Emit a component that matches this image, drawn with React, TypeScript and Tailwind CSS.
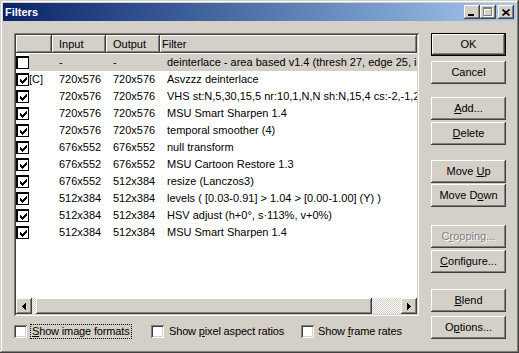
import type { ReactNode } from 'react'

const FONT = "font-['Liberation_Sans',Arial,sans-serif]"
const RAISED = 'shadow-[inset_-1px_-1px_#404040,inset_1px_1px_#fff,inset_-2px_-2px_#808080,inset_2px_2px_#d4d0c8]'
const SUNKEN = 'shadow-[inset_1px_1px_#808080,inset_-1px_-1px_#fff,inset_2px_2px_#404040,inset_-2px_-2px_#d4d0c8]'

const ROWS = [
  { on: false, tag: '', a: '-', b: '-', name: 'deinterlace - area based v1.4 (thresh 27, edge 25, interlaced only)', sel: true },
  { on: true, tag: '[C]', a: '720x576', b: '720x576', name: 'Asvzzz deinterlace' },
  { on: true, tag: '', a: '720x576', b: '720x576', name: 'VHS st:N,5,30,15,5 nr:10,1,N,N sh:N,15,4 cs:-2,-1,2,0,2' },
  { on: true, tag: '', a: '720x576', b: '720x576', name: 'MSU Smart Sharpen 1.4' },
  { on: true, tag: '', a: '720x576', b: '720x576', name: 'temporal smoother (4)' },
  { on: true, tag: '', a: '676x552', b: '676x552', name: 'null transform' },
  { on: true, tag: '', a: '676x552', b: '676x552', name: 'MSU Cartoon Restore 1.3' },
  { on: true, tag: '', a: '676x552', b: '512x384', name: 'resize (Lanczos3)' },
  { on: true, tag: '', a: '512x384', b: '512x384', name: 'levels ( [0.03-0.91] > 1.04 > [0.00-1.00] (Y) )' },
  { on: true, tag: '', a: '512x384', b: '512x384', name: 'HSV adjust (h+0°, s·113%, v+0%)' },
  { on: true, tag: '', a: '512x384', b: '512x384', name: 'MSU Smart Sharpen 1.4' },
]

// 7x7 classic check glyph
const CHECK = ['......x', '.....xx', 'x...xxx', 'xx.xxx.', 'xxxxx..', '.xxx...', '..x....']

function CheckGlyph() {
  return (
    <svg width="7" height="7" viewBox="0 0 7 7" shapeRendering="crispEdges">
      {CHECK.flatMap((line, y) =>
        line.split('').map((c, x) => (c === 'x' ? <rect key={`${x}-${y}`} x={x} y={y} width="1" height="1" fill="#000" /> : null)),
      )}
    </svg>
  )
}

function Btn({ children, def, disabled, className = '' }: { children: ReactNode; def?: boolean; disabled?: boolean; className?: string }) {
  return (
    <div
      className={`flex h-[23px] w-[75px] items-center justify-center bg-[#d4d0c8] text-[11px] ${
        def ? 'border border-black shadow-[inset_-1px_-1px_#404040,inset_1px_1px_#fff,inset_-2px_-2px_#808080]' : RAISED
      } ${disabled ? 'text-[#808080] [text-shadow:1px_1px_0_#fff]' : 'text-black'} ${className}`}
    >
      {children}
    </div>
  )
}

function Box({ checked }: { checked?: boolean }) {
  return (
    <div className={`flex h-[13px] w-[13px] shrink-0 items-center justify-center bg-white ${SUNKEN}`}>
      {checked && <CheckGlyph />}
    </div>
  )
}

function Arrow({ dir }: { dir: 'l' | 'r' }) {
  return (
    <div className={`flex h-[16px] w-[16px] shrink-0 items-center justify-center bg-[#d4d0c8] ${RAISED}`}>
      <svg width="4" height="7" viewBox="0 0 4 7" shapeRendering="crispEdges">
        <path d={dir === 'l' ? 'M4 0L0 3.5L4 7Z' : 'M0 0L4 3.5L0 7Z'} fill="#000" />
      </svg>
    </div>
  )
}

export default function App() {
  return (
    <div
      className={`flex h-[353px] w-[519px] flex-col bg-[#d4d0c8] p-[3px] ${FONT} shadow-[inset_-1px_-1px_#404040,inset_1px_1px_#d4d0c8,inset_-2px_-2px_#808080,inset_2px_2px_#fff]`}
    >
      {/* title bar */}
      <div className="flex h-[18px] items-center bg-gradient-to-r from-[#0a246a] to-[#a6caf0] pl-[2px] pr-[2px]">
        <span className="text-[11px] font-bold text-white">Filters</span>
        <div className="ml-auto flex items-center">
          <div className={`flex h-[14px] w-[16px] items-end justify-center bg-[#d4d0c8] pb-[3px] ${RAISED}`}>
            <div className="ml-[-2px] h-[2px] w-[6px] bg-black" />
          </div>
          <div className={`flex h-[14px] w-[16px] items-center justify-center bg-[#d4d0c8] ${RAISED}`}>
            <svg width="10" height="10" viewBox="0 0 10 10" shapeRendering="crispEdges" className="ml-[-1px]">
              <path d="M1 1h8v8h-8zM1 2h8" fill="none" stroke="#fff" transform="translate(0.5 0.5)" />
              <path d="M0 0h8v8h-8zM0 1h8" fill="none" stroke="#808080" transform="translate(0.5 0.5)" />
            </svg>
          </div>
          <div className={`ml-[2px] flex h-[14px] w-[16px] items-center justify-center bg-[#d4d0c8] ${RAISED}`}>
            <svg width="8" height="7" viewBox="0 0 8 7" className="ml-[-1px]">
              <path d="M0.5 0.5L7.5 6.5M7.5 0.5L0.5 6.5" stroke="#000" strokeWidth="1.6" />
            </svg>
          </div>
        </div>
      </div>

      <div className="flex flex-1 pl-[11px] pt-[12px] text-[11px] text-black">
        {/* left side */}
        <div className="flex w-[405px] flex-col">
          <div className={`flex h-[283px] flex-col overflow-hidden bg-white p-[2px] ${SUNKEN}`}>
            {/* header */}
            <div className="flex h-[18px] shrink-0 bg-[#d4d0c8]">
              <div className={`w-[36px] shrink-0 ${RAISED}`} />
              <div className={`flex w-[54px] shrink-0 items-center pl-[7px] ${RAISED}`}>Input</div>
              <div className={`flex w-[54px] shrink-0 items-center pl-[7px] ${RAISED}`}>Output</div>
              <div className={`flex flex-1 items-center pl-[2px] ${RAISED}`}>Filter</div>
            </div>
            {/* rows */}
            <div className="flex-1 overflow-hidden pt-[1px]">
              {ROWS.map((r, i) => (
                <div key={i} className="flex h-[17px] items-center whitespace-nowrap">
                  <div className="flex h-[13px] w-[13px] shrink-0 items-center justify-center border-b border-l-2 border-r border-t-2 border-black bg-white">
                    {r.on && <CheckGlyph />}
                  </div>
                  <div className={`flex h-full flex-1 items-center ${r.sel ? 'bg-[#d4d0c8]' : ''}`}>
                    <span className="w-[30px] shrink-0">{r.tag}</span>
                    <span className="w-[54px] shrink-0">{r.a}</span>
                    <span className="w-[54px] shrink-0">{r.b}</span>
                    <span>{r.name}</span>
                  </div>
                </div>
              ))}
            </div>
            {/* horizontal scrollbar */}
            <div className="flex h-[16px] shrink-0">
              <Arrow dir="l" />
              <div className="flex flex-1 bg-[repeating-conic-gradient(#fff_0_25%,#d4d0c8_0_50%)] bg-[length:2px_2px] pl-[4px] pr-[29px]">
                <div className={`flex-1 bg-[#d4d0c8] ${RAISED}`} />
              </div>
              <Arrow dir="r" />
            </div>
          </div>

          {/* options */}
          <div className="mt-[7px] flex items-center whitespace-nowrap tracking-[-0.15px]">
            <div className="flex w-[137px] shrink-0 items-center">
              <Box />
              <span className="ml-[3px] border border-dotted border-black px-[1px] leading-[13px]">
                <u>S</u>how image formats
              </span>
            </div>
            <div className="flex w-[150px] shrink-0 items-center">
              <Box />
              <span className="ml-[5px]">
                Show <u>p</u>ixel aspect ratios
              </span>
            </div>
            <div className="flex items-center">
              <Box />
              <span className="ml-[4px]">
                Show <u>f</u>rame rates
              </span>
            </div>
          </div>
        </div>

        {/* buttons */}
        <div className="ml-[12px] flex flex-col">
          <Btn def>OK</Btn>
          <Btn className="mt-[5px]">Cancel</Btn>
          <Btn className="mt-[13px]">
            <span>
              <u>A</u>dd...
            </span>
          </Btn>
          <Btn className="mt-[2px]">
            <span>
              <u>D</u>elete
            </span>
          </Btn>
          <Btn className="mt-[15px]">
            <span>
              Move <u>U</u>p
            </span>
          </Btn>
          <Btn className="mt-[1px]">
            <span>
              Move D<u>o</u>wn
            </span>
          </Btn>
          <Btn disabled className="mt-[18px]">
            <span>
              C<u>r</u>opping...
            </span>
          </Btn>
          <Btn className="mt-[2px]">
            <span>
              <u>C</u>onfigure...
            </span>
          </Btn>
          <Btn className="mt-[16px]">
            <span>
              <u>B</u>lend
            </span>
          </Btn>
          <Btn className="mt-[4px]">
            <span>
              O<u>p</u>tions...
            </span>
          </Btn>
        </div>
      </div>
    </div>
  )
}
